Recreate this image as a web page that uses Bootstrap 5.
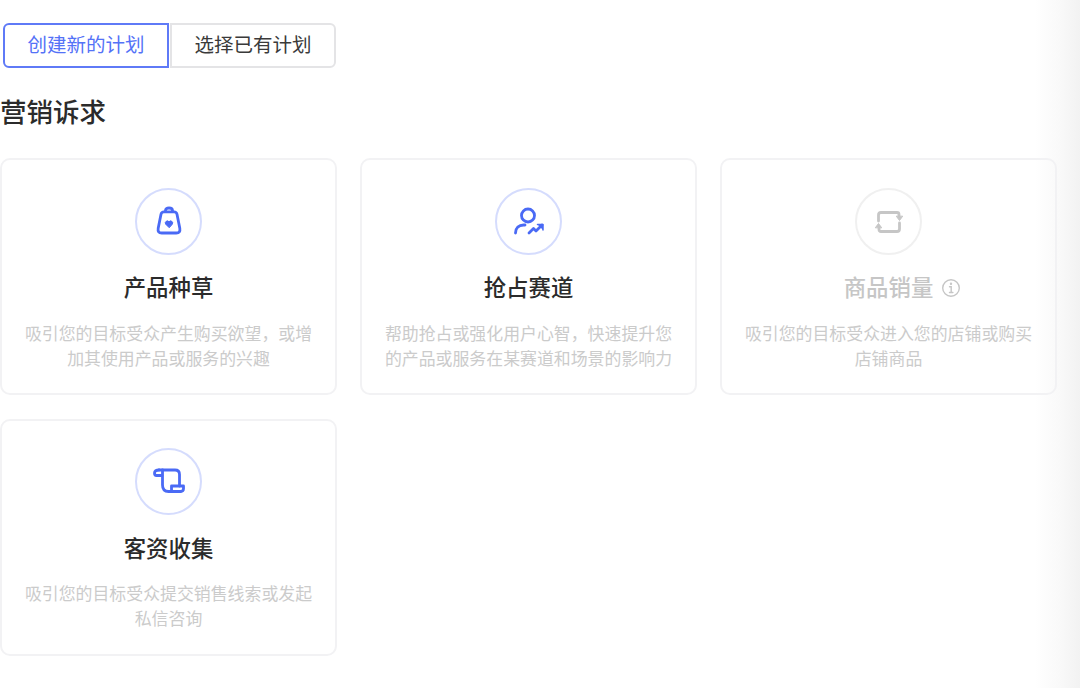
<!DOCTYPE html>
<html lang="zh">
<head>
<meta charset="utf-8">
<title>营销诉求</title>
<link href="https://cdn.jsdelivr.net/npm/bootstrap@5.3.0/dist/css/bootstrap.min.css" rel="stylesheet">
<style>
html,body{height:688px;overflow:hidden}
body{font-family:"Inter","Noto Sans CJK SC",sans-serif;color:#333;background:linear-gradient(90deg,#fff 1035px,#f9f9f9 1060px,#f2f2f2 1080px)}
.page-wrap{padding-top:23px;width:1057px}
.mode-row{padding-left:3px;gap:1px}
.mode-btn{width:166px;height:45px;padding:0;font-size:19.5px;line-height:41px;background:transparent;color:#3a3a3a;border:2px solid #e4e4e6;border-radius:0 6px 6px 0}
.mode-btn.is-on{color:#5472f7;border-color:#5f7af7;border-radius:6px 0 0 6px}
.sec-title{font-size:26.500px;font-weight:500;line-height:36px;margin:26px 0 28px;color:#2b2b2b}
.goal-grid{display:grid;grid-template-columns:repeat(3,337px);column-gap:23px;row-gap:23.500px}
.goal-card{height:237px;border:2px solid #f2f2f4;border-radius:10px;padding:28px 16px 0;text-align:center;background:transparent}
.goal-card-low{padding-top:27px}
.goal-ico{width:67px;height:67px;border:2px solid #d5dcfd;border-radius:50%;color:#4a6af5}
.goal-ico svg{width:32px;height:32px}
.goal-name{font-size:22.400px;font-weight:500;line-height:30px;margin:18px 0 18.500px;color:#2b2b2b}
.goal-card-low .goal-name{margin-top:19px}
.goal-desc{font-size:16.900px;line-height:25px;color:#cbcbcb;margin:0}
.goal-card.is-off .goal-ico{border-color:#f0f0f0;color:#c6c6c6}
.goal-card.is-off .goal-name{color:#c6c6c6}
.name-wrap{position:relative;display:inline-block}
.tip-ico{position:absolute;left:calc(100% + 8px);top:5px;width:20px;height:20px;color:#c6c6c6}
</style>
</head>
<body>
<div class="page-wrap">
  <div class="d-flex mode-row">
    <button type="button" class="btn mode-btn is-on">创建新的计划</button>
    <button type="button" class="btn mode-btn">选择已有计划</button>
  </div>
  <h2 class="sec-title">营销诉求</h2>
  <div class="goal-grid">
    <div class="goal-card">
      <div class="goal-ico d-flex align-items-center justify-content-center mx-auto">
        <svg viewBox="0 0 32 32" fill="none" stroke="currentColor" stroke-width="2.800" stroke-linecap="round" stroke-linejoin="round"><path d="M12.500 5.500v-1q0-2.500 3.500-2.500t3.500 2.500v1"/><path d="M11 5.800h10q2.500 0 3 2.500l2.800 14q.8 4.700-3.500 4.700H8.700q-4.300 0-3.500-4.700L8 8.300q.5-2.500 3-2.500z"/><path d="M16 21.500l-3.300-3.300a1.900 1.900 0 0 1 3.300-2.400a1.900 1.900 0 0 1 3.300 2.400z" fill="currentColor" stroke-width="1"/></svg>
      </div>
      <div class="goal-name">产品种草</div>
      <p class="goal-desc">吸引您的目标受众产生购买欲望，或增<br>加其使用产品或服务的兴趣</p>
    </div>
    <div class="goal-card">
      <div class="goal-ico d-flex align-items-center justify-content-center mx-auto">
        <svg viewBox="0 0 32 32" fill="none" stroke="currentColor" stroke-width="2.800" stroke-linecap="round" stroke-linejoin="round"><circle cx="15" cy="9.500" r="6.500"/><path d="M2.500 27c0-5 3.500-8 8-8h1.500"/><path d="M16 27l4.500-4.500 2.500 2.500 6-6"/><path d="M24.500 18.500h5.500v5.500" fill="currentColor" stroke-width="1.500"/></svg>
      </div>
      <div class="goal-name">抢占赛道</div>
      <p class="goal-desc">帮助抢占或强化用户心智，快速提升您<br>的产品或服务在某赛道和场景的影响力</p>
    </div>
    <div class="goal-card is-off">
      <div class="goal-ico d-flex align-items-center justify-content-center mx-auto">
        <svg viewBox="0 0 32 32" fill="none" stroke="currentColor" stroke-width="2.800" stroke-linecap="round" stroke-linejoin="round"><path d="M5.500 15V9q0-2.500 2.500-2.500h16q2 0 2 2V11"/><path d="M26.500 17v6q0 2.500-2.500 2.500H8q-2 0-2-2V21"/><path d="M23.500 10.500l3 4 3-4z" fill="currentColor" stroke-width="1"/><path d="M2.500 21.500l3-4 3 4z" fill="currentColor" stroke-width="1"/></svg>
      </div>
      <div class="goal-name"><span class="name-wrap">商品销量<svg class="tip-ico" viewBox="0 0 20 20" fill="none" stroke="currentColor" stroke-width="1.400" stroke-linecap="round"><circle cx="10" cy="10" r="8.300"/><path d="M8.500 8.800H10.200V14.500M8.500 14.500h3.400"/><circle cx="10" cy="5.800" r=".5" fill="currentColor"/></svg></span></div>
      <p class="goal-desc">吸引您的目标受众进入您的店铺或购买<br>店铺商品</p>
    </div>
    <div class="goal-card goal-card-low">
      <div class="goal-ico d-flex align-items-center justify-content-center mx-auto">
        <svg viewBox="0 0 32 32" fill="none" stroke="currentColor" stroke-width="2.800" stroke-linecap="round" stroke-linejoin="round"><path d="M6 5h16q4.500 0 4.500 4.500V21"/><path d="M9.500 5v15q0 6.500 6 6.500h12"/><path d="M6 5Q1.500 5 1.500 8q0 2.500 2 2.500h5.500"/><path d="M18.500 21h12v2.500q0 3-3 3h-7q-2 0-2-2z"/></svg>
      </div>
      <div class="goal-name">客资收集</div>
      <p class="goal-desc">吸引您的目标受众提交销售线索或发起<br>私信咨询</p>
    </div>
  </div>
</div>
<script src="https://cdn.jsdelivr.net/npm/bootstrap@5.3.0/dist/js/bootstrap.bundle.min.js"></script>
</body>
</html>
